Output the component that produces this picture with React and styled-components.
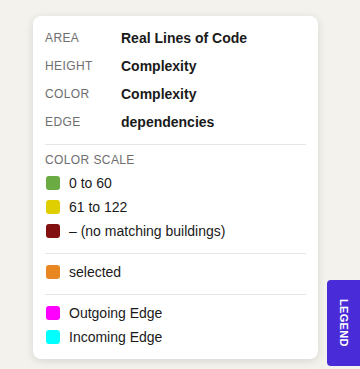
import React from "react";
import styled, { createGlobalStyle } from "styled-components";

const Global = createGlobalStyle`
  html, body { margin: 0; padding: 0; }
  body {
    background: #f3f2ec;
    font-family: "Liberation Sans", Arial, Helvetica, sans-serif;
    width: 360px;
    height: 369px;
    overflow: hidden;
  }
`;

const Page = styled.div`
  position: relative;
  width: 360px;
  height: 369px;
  padding: 16px 0 0 33px;
  box-sizing: border-box;
`;

const Card = styled.div`
  width: 285px;
  background: #ffffff;
  border-radius: 8px;
  box-shadow: 0 2px 8px rgba(0, 0, 0, 0.12);
  padding: 0 12px;
  box-sizing: border-box;
`;

const Section = styled.div`
  padding: ${(p) => p.$pad || "6px 0 10px"};
  & + & {
    border-top: 1px solid #e6e6e6;
  }
`;

const MetaRow = styled.div`
  display: grid;
  grid-template-columns: 76px 1fr;
  align-items: center;
  height: 28px;
`;

const Label = styled.span`
  font-size: 12px;
  color: #6e6e6e;
  letter-spacing: 0.4px;
  text-transform: uppercase;
`;

const Value = styled.span`
  font-size: 14px;
  font-weight: 700;
  color: #1a1a1a;
`;

const Title = styled.div`
  font-size: 12px;
  line-height: 18px;
  color: #6e6e6e;
  letter-spacing: 0.4px;
  text-transform: uppercase;
  margin-bottom: 2px;
`;

const Item = styled.div`
  display: flex;
  align-items: center;
  gap: 9px;
  height: 24px;
  padding-left: 1px;
  font-size: 14px;
  color: #1a1a1a;
`;

const Swatch = styled.span`
  width: 14px;
  height: 14px;
  border-radius: 3px;
  background: ${(p) => p.$color};
  flex: none;
`;

const Tab = styled.button`
  position: absolute;
  left: 327px;
  top: 280px;
  width: 33px;
  height: 86px;
  border: none;
  padding: 0;
  background: #4a2bd8;
  border-radius: 4px 0 0 4px;
  color: #ffffff;
  display: flex;
  align-items: center;
  justify-content: center;
  cursor: pointer;
`;

const TabText = styled.span`
  writing-mode: vertical-rl;
  font-family: "Liberation Sans", Arial, sans-serif;
  font-size: 11px;
  font-weight: 700;
  letter-spacing: 0.3px;
`;

const meta = [
  ["Area", "Real Lines of Code"],
  ["Height", "Complexity"],
  ["Color", "Complexity"],
  ["Edge", "dependencies"],
];

const scale = [
  ["#6aab44", "0 to 60"],
  ["#e0cf00", "61 to 122"],
  ["#821010", "– (no matching buildings)"],
];

const edges = [
  ["#ff00ff", "Outgoing Edge"],
  ["#00ffff", "Incoming Edge"],
];

export default function App() {
  return (
    <>
      <Global />
      <Page>
        <Card>
          <Section $pad="8px 0 8px">
            {meta.map(([k, v]) => (
              <MetaRow key={k}>
                <Label>{k}</Label>
                <Value>{v}</Value>
              </MetaRow>
            ))}
          </Section>
          <Section>
            <Title>Color Scale</Title>
            {scale.map(([c, t]) => (
              <Item key={t}>
                <Swatch $color={c} />
                {t}
              </Item>
            ))}
          </Section>
          <Section>
            <Item>
              <Swatch $color="#e8861f" />
              selected
            </Item>
          </Section>
          <Section>
            {edges.map(([c, t]) => (
              <Item key={t}>
                <Swatch $color={c} />
                {t}
              </Item>
            ))}
          </Section>
        </Card>
        <Tab>
          <TabText>LEGEND</TabText>
        </Tab>
      </Page>
    </>
  );
}
